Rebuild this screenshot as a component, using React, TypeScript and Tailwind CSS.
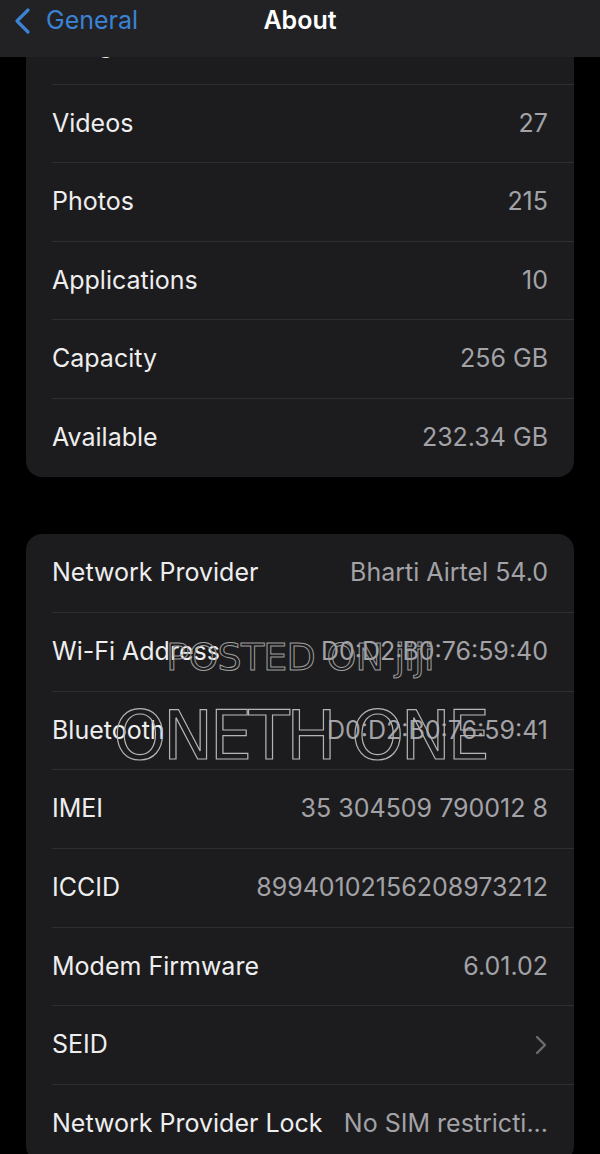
import React from "react";

const storage = [
  { label: "Songs", value: "0" },
  { label: "Videos", value: "27" },
  { label: "Photos", value: "215" },
  { label: "Applications", value: "10" },
  { label: "Capacity", value: "256 GB" },
  { label: "Available", value: "232.34 GB" },
];

const network = [
  { label: "Network Provider", value: "Bharti Airtel 54.0" },
  { label: "Wi-Fi Address", value: "D0:D2:B0:76:59:40" },
  { label: "Bluetooth", value: "D0:D2:B0:76:59:41" },
  { label: "IMEI", value: "35 304509 790012 8" },
  { label: "ICCID", value: "89940102156208973212" },
  { label: "Modem Firmware", value: "6.01.02" },
  { label: "SEID", value: "", chevron: true },
  { label: "Network Provider Lock", value: "No SIM restricti..." },
];

function Row({
  label,
  value,
  first,
  chevron,
}: {
  label: string;
  value: string;
  first: boolean;
  chevron?: boolean;
}) {
  return (
    <div className="h-[78.6px] pl-[26px]">
      <div
        className={
          "flex h-full items-center justify-between pr-[26px] " +
          (first ? "" : "border-t border-[#2e2e30]")
        }
      >
        <span className="whitespace-nowrap text-[#eeeeee]">{label}</span>
        {chevron ? (
          <svg width="12" height="20" viewBox="0 0 12 20" className="mr-[1px]">
            <path
              d="M2 2 L10 10 L2 18"
              fill="none"
              stroke="#6b6b70"
              strokeWidth="2.4"
              strokeLinecap="round"
              strokeLinejoin="round"
            />
          </svg>
        ) : (
          <span className="whitespace-nowrap text-[#a2a2a7]">{value}</span>
        )}
      </div>
    </div>
  );
}

export default function App() {
  return (
    <div className="relative h-[1154px] w-[600px] overflow-hidden bg-black font-['Inter','Liberation_Sans',sans-serif] text-[25px]">
      {/* nav bar sits over the scrolled list */}
      <div className="absolute left-0 right-0 top-0 z-10 h-[57px] bg-[#222224]">
        <div className="relative flex h-[42px] items-center">
          <div className="flex items-center pl-[13px] text-[#3b82d4]">
            <svg width="20" height="28" viewBox="0 0 20 28">
              <path
                d="M15 3 L4 14 L15 25"
                fill="none"
                stroke="#3b82d4"
                strokeWidth="3.2"
                strokeLinecap="round"
                strokeLinejoin="round"
              />
            </svg>
            <span className="ml-[13px]">General</span>
          </div>
          <div className="absolute inset-x-0 text-center font-semibold text-white">
            About
          </div>
        </div>
      </div>

      <div className="px-[26px] pt-[5px]">
        <div className="overflow-hidden rounded-b-[16px] bg-[#1c1c1e]">
          {storage.map((r, i) => (
            <Row key={r.label} label={r.label} value={r.value} first={i === 0} />
          ))}
        </div>

        <div className="mt-[57px] overflow-hidden rounded-[16px] bg-[#1c1c1e]">
          {network.map((r, i) => (
            <Row
              key={r.label}
              label={r.label}
              value={r.value}
              first={i === 0}
              chevron={r.chevron}
            />
          ))}
        </div>
      </div>

      {/* watermark */}
      <div className="pointer-events-none absolute left-0 right-0 top-[632px] flex flex-col items-center font-['DejaVu_Sans',sans-serif] text-transparent">
        <div className="text-[38px] leading-[50px] tracking-[-0.02em] [-webkit-text-stroke:1px_#9c9c9c]">
          POSTED ON jiji
        </div>
        <div className="mt-[16px] text-[67px] leading-[76px] tracking-[-0.05em] [-webkit-text-stroke:1.2px_#b4b4b4]">
          ONETH ONE
        </div>
      </div>
    </div>
  );
}
